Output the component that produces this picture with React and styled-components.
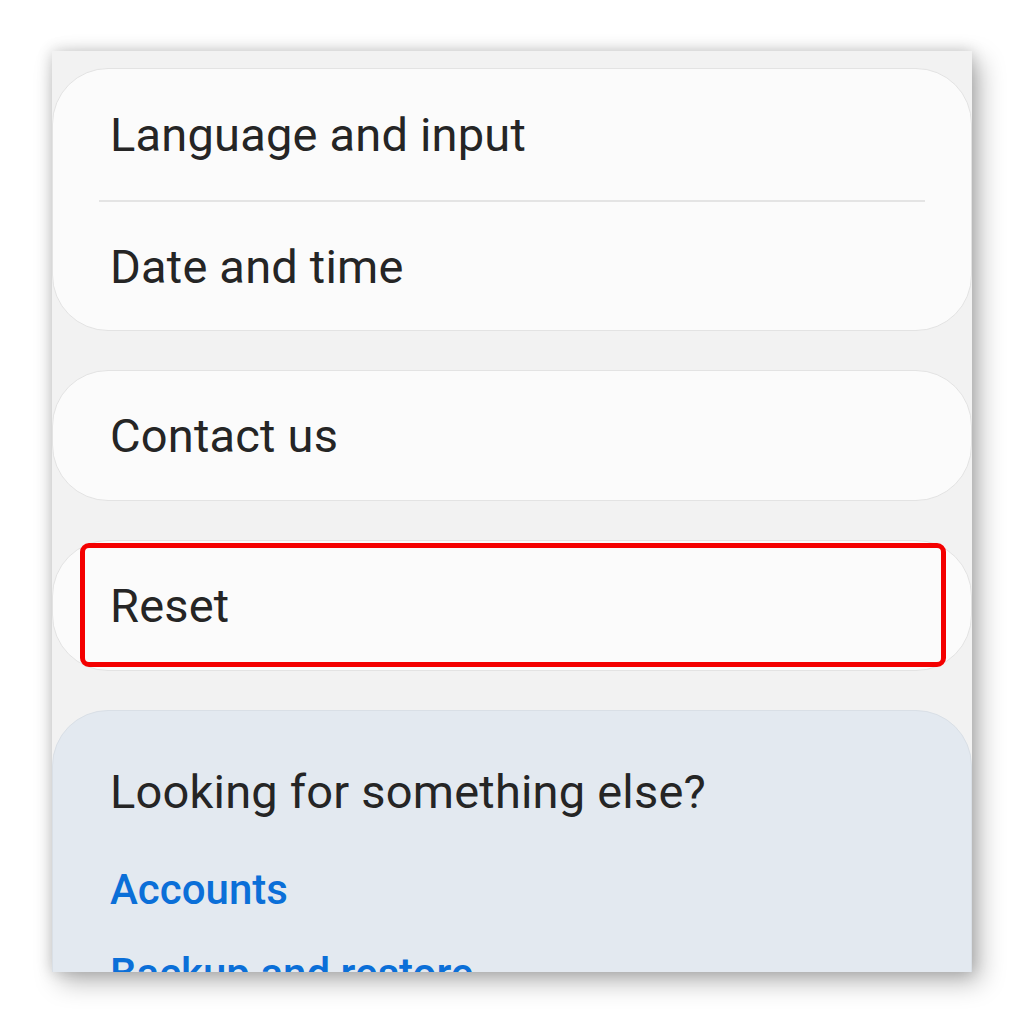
import React from 'react'
import styled, { createGlobalStyle } from 'styled-components'

const GlobalStyle = createGlobalStyle`
  html, body {
    margin: 0;
    padding: 0;
    background: #ffffff;
  }
  body {
    font-family: Roboto, "Noto Sans", "Liberation Sans", sans-serif;
  }
`

const App = () => {
  return (
    <>
      <GlobalStyle />
      <Page>
        <Screen>
          <Card>
            <Row first>Language and input</Row>
            <Divider />
            <Row last>Date and time</Row>
          </Card>

          <Card>
            <Row first last>Contact us</Row>
          </Card>

          <Card>
            <Row first last>Reset</Row>
            <Highlight />
          </Card>

          <SuggestCard>
            <SuggestTitle>Looking for something else?</SuggestTitle>
            <SuggestLink>Accounts</SuggestLink>
            <SuggestLink>Backup and restore</SuggestLink>
          </SuggestCard>
        </Screen>
      </Page>
    </>
  )
}

const Page = styled.div`
  width: 1024px;
  height: 1024px;
  padding: 51px 0 0 52px;
  box-sizing: border-box;
`

const Screen = styled.div`
  width: 920px;
  height: 921px;
  background: #f2f2f2;
  overflow: hidden;
  padding-top: 17px;
  box-sizing: border-box;
  display: flex;
  flex-direction: column;
  gap: 39px;
  box-shadow: 0 0 14px rgba(0, 0, 0, 0.18), 8px 10px 24px rgba(0, 0, 0, 0.28);
`

const Card = styled.div`
  position: relative;
  background: #fbfbfb;
  border: 1px solid #e3e3e3;
  border-radius: 56px;
  display: flex;
  flex-direction: column;
`

const Row = styled.div`
  height: ${(p) => (p.first && p.last ? '129px' : p.first ? '131px' : '128px')};
  display: flex;
  align-items: center;
  padding-left: 57px;
  font-size: 47px;
  color: #252525;
  letter-spacing: 0.2px;
`

const Divider = styled.div`
  height: 2px;
  margin: 0 46px;
  background: #e4e4e4;
`

// red marker drawn over the Reset row
const Highlight = styled.div`
  position: absolute;
  left: 27px;
  top: 2px;
  width: 866px;
  height: 124px;
  border: 5px solid #f40000;
  border-radius: 9px;
  box-sizing: border-box;
`

const SuggestCard = styled.div`
  background: #e3e9f0;
  border: 1px solid #d9dfe6;
  border-radius: 56px;
  padding: 53px 0 0 57px;
  display: flex;
  flex-direction: column;
  flex-shrink: 0;
  height: 400px;
`

const SuggestTitle = styled.div`
  font-size: 47px;
  color: #252525;
  letter-spacing: 0.2px;
  margin-bottom: 46px;
`

const SuggestLink = styled.div`
  font-size: 42px;
  line-height: 49px;
  font-weight: 500;
  color: #0b6fd8;
  margin-bottom: 35px;
`

export default App
